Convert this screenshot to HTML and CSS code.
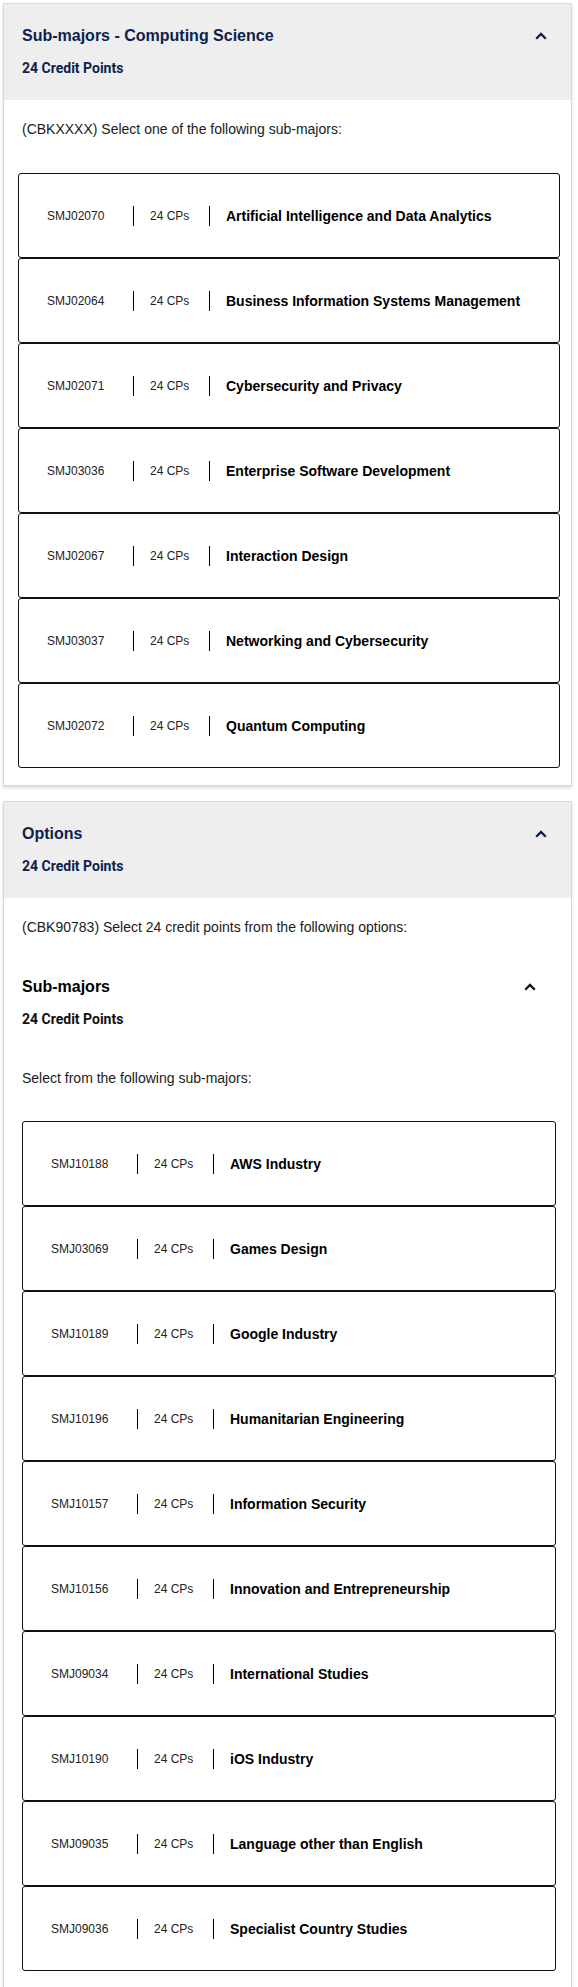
FILE: index.html
```html
<!DOCTYPE html>
<html>

<head>
    <title>Sub-majors</title>
    <link rel="stylesheet" href="styles.css">
</head>

<body>
    <div class="page">

        <div class="card">
            <div class="card-head">
                <div class="head-row">
                    <h2>Sub-majors - Computing Science</h2>
                    <svg class="chevron" width="12" height="8" viewBox="0 0 12 8"><path d="M1.2 6.8 L6 2 L10.8 6.8" /></svg>
                </div>
                <div class="credits">24 Credit Points</div>
            </div>
            <div class="card-body">
                <p class="desc">(CBKXXXX) Select one of the following sub-majors:</p>
                <div class="list">
                    <div class="item"><span class="code">SMJ02070</span><span class="cp">24 CPs</span><span class="name">Artificial Intelligence and Data Analytics</span></div>
                    <div class="item"><span class="code">SMJ02064</span><span class="cp">24 CPs</span><span class="name">Business Information Systems Management</span></div>
                    <div class="item"><span class="code">SMJ02071</span><span class="cp">24 CPs</span><span class="name">Cybersecurity and Privacy</span></div>
                    <div class="item"><span class="code">SMJ03036</span><span class="cp">24 CPs</span><span class="name">Enterprise Software Development</span></div>
                    <div class="item"><span class="code">SMJ02067</span><span class="cp">24 CPs</span><span class="name">Interaction Design</span></div>
                    <div class="item"><span class="code">SMJ03037</span><span class="cp">24 CPs</span><span class="name">Networking and Cybersecurity</span></div>
                    <div class="item"><span class="code">SMJ02072</span><span class="cp">24 CPs</span><span class="name">Quantum Computing</span></div>
                </div>
            </div>
        </div>

        <div class="card">
            <div class="card-head">
                <div class="head-row">
                    <h2>Options</h2>
                    <svg class="chevron" width="12" height="8" viewBox="0 0 12 8"><path d="M1.2 6.8 L6 2 L10.8 6.8" /></svg>
                </div>
                <div class="credits">24 Credit Points</div>
            </div>
            <div class="card-body">
                <p class="desc">(CBK90783) Select 24 credit points from the following options:</p>

                <div class="sub">
                    <div class="head-row sub-row">
                        <h3>Sub-majors</h3>
                        <svg class="chevron dark" width="12" height="8" viewBox="0 0 12 8"><path d="M1.2 6.8 L6 2 L10.8 6.8" /></svg>
                    </div>
                    <div class="credits sub-credits">24 Credit Points</div>
                    <p class="desc sub-desc">Select from the following sub-majors:</p>
                    <div class="list inner">
                        <div class="item"><span class="code">SMJ10188</span><span class="cp">24 CPs</span><span class="name">AWS Industry</span></div>
                        <div class="item"><span class="code">SMJ03069</span><span class="cp">24 CPs</span><span class="name">Games Design</span></div>
                        <div class="item"><span class="code">SMJ10189</span><span class="cp">24 CPs</span><span class="name">Google Industry</span></div>
                        <div class="item"><span class="code">SMJ10196</span><span class="cp">24 CPs</span><span class="name">Humanitarian Engineering</span></div>
                        <div class="item"><span class="code">SMJ10157</span><span class="cp">24 CPs</span><span class="name">Information Security</span></div>
                        <div class="item"><span class="code">SMJ10156</span><span class="cp">24 CPs</span><span class="name">Innovation and Entrepreneurship</span></div>
                        <div class="item"><span class="code">SMJ09034</span><span class="cp">24 CPs</span><span class="name">International Studies</span></div>
                        <div class="item"><span class="code">SMJ10190</span><span class="cp">24 CPs</span><span class="name">iOS Industry</span></div>
                        <div class="item"><span class="code">SMJ09035</span><span class="cp">24 CPs</span><span class="name">Language other than English</span></div>
                        <div class="item"><span class="code">SMJ09036</span><span class="cp">24 CPs</span><span class="name">Specialist Country Studies</span></div>
                    </div>
                </div>
            </div>
        </div>

    </div>
</body>

</html>
```

FILE: styles.css
```css
body {
    margin: 0;
    background-color: #fff;
    font-family: "Liberation Sans", Arial, sans-serif;
    color: #000;
}

.page {
    padding: 3px 6px 0 3px;
}

.card {
    background-color: #fff;
    border: 1px solid #d9d9d9;
    box-shadow: 0 2px 3px rgba(0, 0, 0, 0.15);
    margin-bottom: 15px;
}

.card-head {
    background-color: #eeeeee;
    padding: 22px 24px 23px 18px;
}

.head-row {
    display: flex;
    justify-content: space-between;
    align-items: center;
}

h2,
h3 {
    margin: 0;
    font-size: 16px;
    line-height: 20px;
    font-weight: bold;
}

h2 {
    color: #0d1f4d;
}

.chevron {
    fill: none;
    stroke: #0d1f4d;
    stroke-width: 2.3;
}

.chevron.dark {
    stroke: #111;
}

.credits {
    margin-top: 13px;
    font-family: Roboto, "Liberation Sans", sans-serif;
    font-weight: bold;
    font-size: 14px;
    line-height: 18px;
    color: #0d1f4d;
}

.card-body {
    padding: 19px 11px 17px 14px;
}

.desc {
    margin: 0;
    padding: 0 4px;
    font-size: 14px;
    line-height: 20px;
    color: #1a1a1a;
}

.list {
    margin-top: 34px;
}

.item {
    display: flex;
    align-items: center;
    height: 85px;
    box-sizing: border-box;
    border: 1px solid #111;
    border-radius: 3px;
    padding-left: 28px;
}

.code {
    width: 86px;
    font-size: 12px;
    line-height: 20px;
    color: #222;
}

.cp {
    width: 76px;
    box-sizing: border-box;
    padding-left: 16px;
    border-left: 1px solid #000;
    font-size: 12px;
    line-height: 20px;
    color: #222;
}

.name {
    padding-left: 16px;
    border-left: 1px solid #000;
    font-size: 14px;
    line-height: 20px;
    font-weight: bold;
}

/* nested sub-major block */
.sub-row {
    margin-top: 40px;
    padding: 0 24px 0 4px;
}

.sub-credits {
    margin-top: 13px;
    padding: 0 4px;
    color: #111;
}

.sub-desc {
    margin-top: 40px;
}

.list.inner {
    margin: 33px 4px 0 4px;
}
```
